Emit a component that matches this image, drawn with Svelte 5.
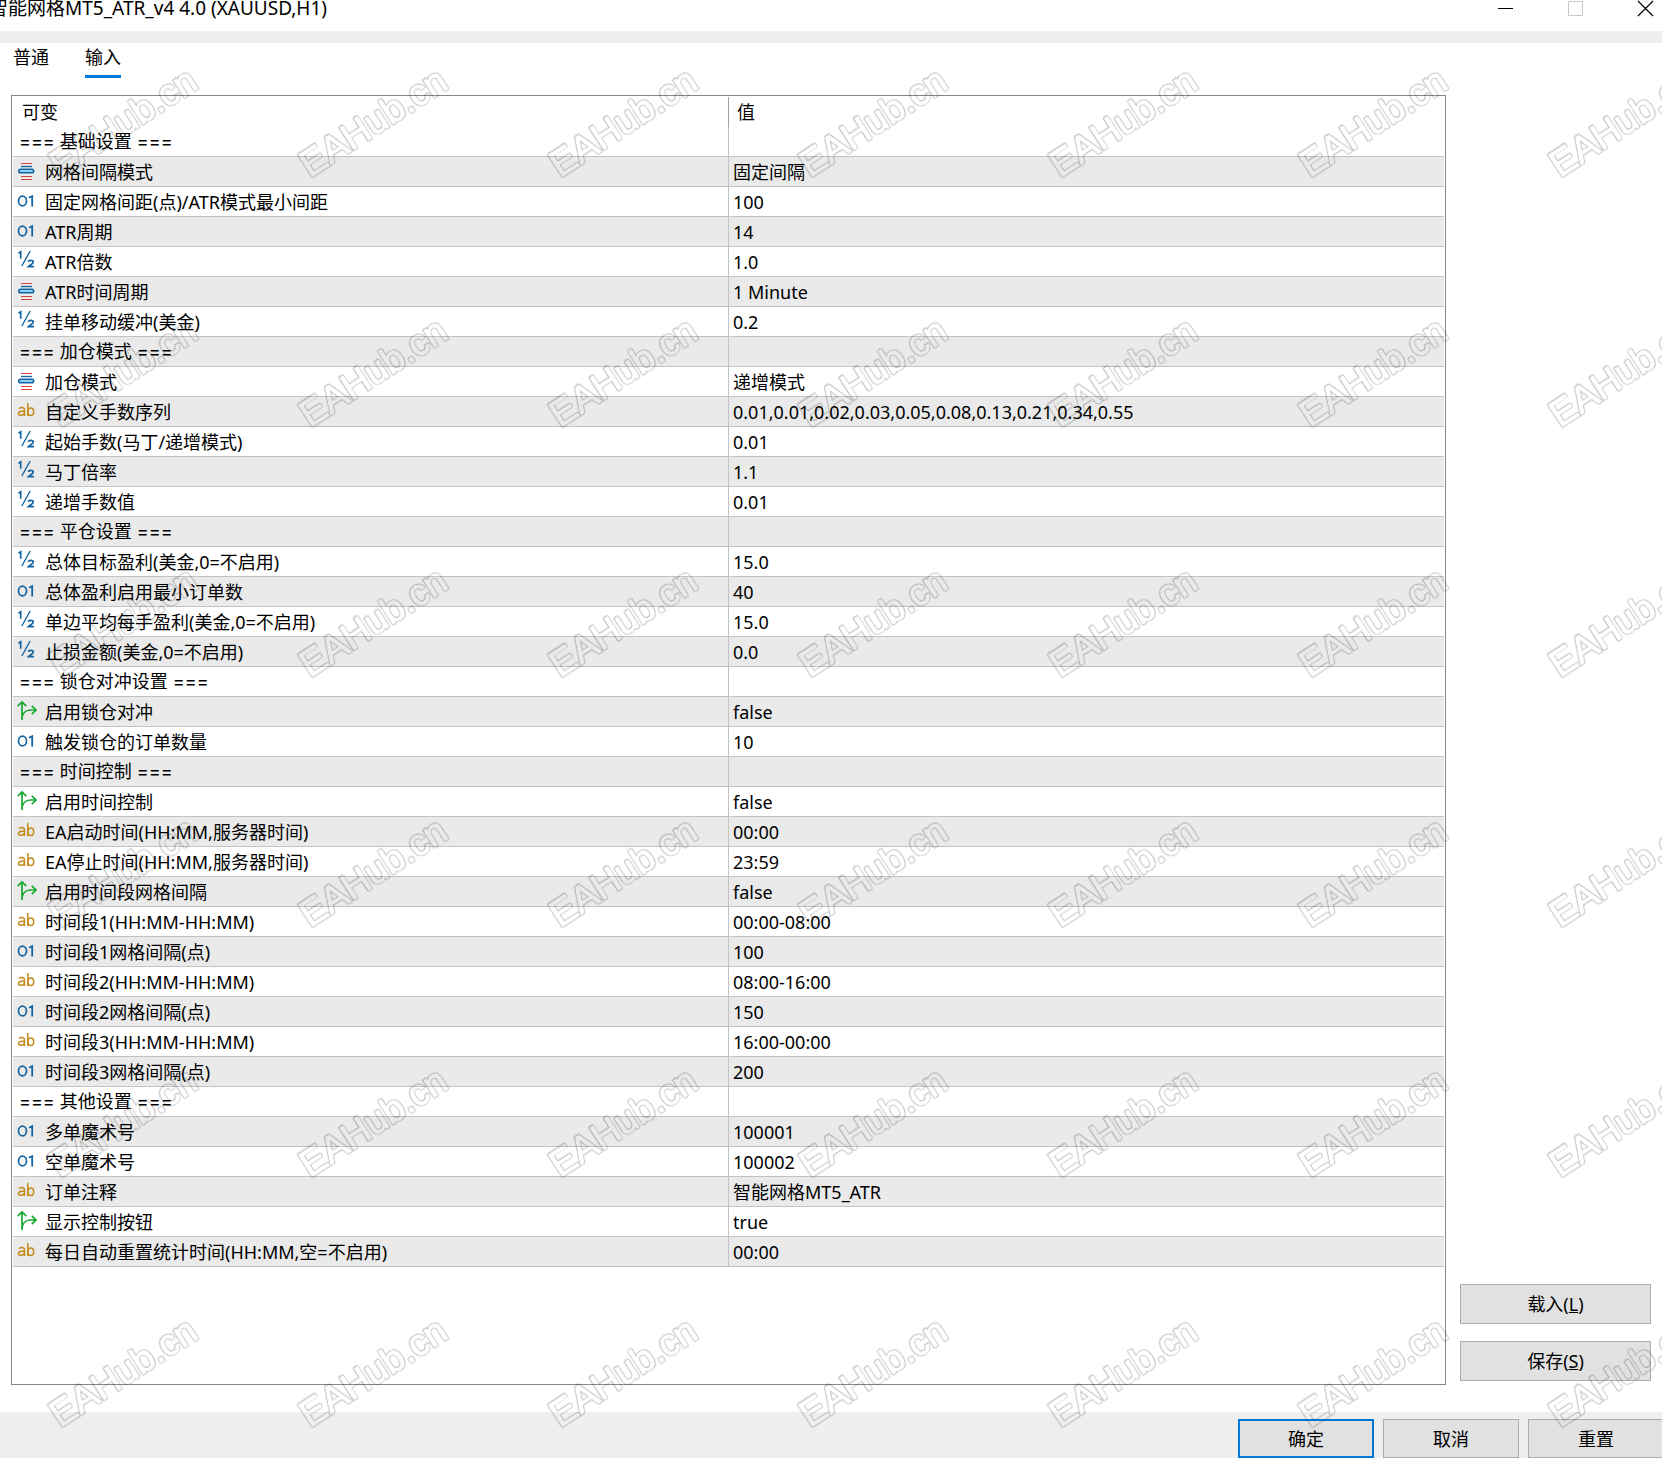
<script lang="ts">
	type Kind = 'enum' | 'int' | 'double' | 'string' | 'bool' | 'group';

	const rows: [Kind, string, string][] = [
		['group', '=== 基础设置 ===', ''],
		['enum', '网格间隔模式', '固定间隔'],
		['int', '固定网格间距(点)/ATR模式最小间距', '100'],
		['int', 'ATR周期', '14'],
		['double', 'ATR倍数', '1.0'],
		['enum', 'ATR时间周期', '1 Minute'],
		['double', '挂单移动缓冲(美金)', '0.2'],
		['group', '=== 加仓模式 ===', ''],
		['enum', '加仓模式', '递增模式'],
		['string', '自定义手数序列', '0.01,0.01,0.02,0.03,0.05,0.08,0.13,0.21,0.34,0.55'],
		['double', '起始手数(马丁/递增模式)', '0.01'],
		['double', '马丁倍率', '1.1'],
		['double', '递增手数值', '0.01'],
		['group', '=== 平仓设置 ===', ''],
		['double', '总体目标盈利(美金,0=不启用)', '15.0'],
		['int', '总体盈利启用最小订单数', '40'],
		['double', '单边平均每手盈利(美金,0=不启用)', '15.0'],
		['double', '止损金额(美金,0=不启用)', '0.0'],
		['group', '=== 锁仓对冲设置 ===', ''],
		['bool', '启用锁仓对冲', 'false'],
		['int', '触发锁仓的订单数量', '10'],
		['group', '=== 时间控制 ===', ''],
		['bool', '启用时间控制', 'false'],
		['string', 'EA启动时间(HH:MM,服务器时间)', '00:00'],
		['string', 'EA停止时间(HH:MM,服务器时间)', '23:59'],
		['bool', '启用时间段网格间隔', 'false'],
		['string', '时间段1(HH:MM-HH:MM)', '00:00-08:00'],
		['int', '时间段1网格间隔(点)', '100'],
		['string', '时间段2(HH:MM-HH:MM)', '08:00-16:00'],
		['int', '时间段2网格间隔(点)', '150'],
		['string', '时间段3(HH:MM-HH:MM)', '16:00-00:00'],
		['int', '时间段3网格间隔(点)', '200'],
		['group', '=== 其他设置 ===', ''],
		['int', '多单魔术号', '100001'],
		['int', '空单魔术号', '100002'],
		['string', '订单注释', '智能网格MT5_ATR'],
		['bool', '显示控制按钮', 'true'],
		['string', '每日自动重置统计时间(HH:MM,空=不启用)', '00:00']
	];

	// watermark repeats every 250px
	const markCols = [0, 1, 2, 3, 4, 5, 6];
	const markRows = [0, 1, 2, 3, 4, 5];
</script>

{#snippet icon(kind: Kind)}
	<svg class="icon" width="20" height="20" viewBox="0 0 20 20" fill="none" aria-hidden="true">
		{#if kind === 'enum'}
			<path d="M4 3.5h11M4 16.5h11M4 19.5h11" stroke="#d9443f" />
			<path d="M4 6.5h11" stroke="#1565a3" stroke-width="1.4" />
			<rect x="1.7" y="9.2" width="15" height="3.6" rx="1.8" fill="#8fd0f2" stroke="#1565a3" stroke-width="1.5" />
		{:else if kind === 'int'}
			<ellipse cx="5.5" cy="11" rx="4" ry="4.8" stroke="#1565a3" stroke-width="1.7" />
			<path d="M12 7.8l3.2-1.6v10.2" stroke="#1565a3" stroke-width="1.8" />
		{:else if kind === 'double'}
			<path d="M1.5 3.3l2.2-1.5v7" stroke="#1565a3" stroke-width="1.7" />
			<path d="M13.2 1L4.8 16" stroke="#1565a3" stroke-width="1.4" />
			<path d="M11.5 12c.3-2.3 4.9-2.2 4.7.2-.1 1.6-3.2 2.7-4.7 4.5h5.5" stroke="#1565a3" stroke-width="1.8" />
		{:else if kind === 'string'}
			<path d="M2 8.5c2-1.7 5.5-1.4 5.5 1.500v6M7.500 11c-3 0-6 .2-6 2.400 0 2.800 5 2.600 6-.8" stroke="#c48a1a" stroke-width="1.5" />
			<path d="M10.8 3v13" stroke="#c48a1a" stroke-width="1.5" />
			<ellipse cx="13.8" cy="11.7" rx="2.9" ry="3.7" stroke="#c48a1a" stroke-width="1.5" />
		{:else}
			<path d="M5 20V2M.7 6.200L5 2l4.300 4.200M5 19.500c0-6 3.500-9.500 8.500-9.500H19M14.800 5.800L19 10l-4.200 4.200" stroke="#17a82f" stroke-width="1.7" />
		{/if}
	</svg>
{/snippet}

{#snippet marks()}
	{#each markRows as r}
		{#each markCols as c}
			<text transform="translate({60 + c * 250} {178 + r * 250}) rotate(-33)">EAHub.cn</text>
		{/each}
	{/each}
{/snippet}

<div class="dialog">
	<header class="titlebar">
		<h1>智能网格MT5_ATR_v4 4.0 (XAUUSD,H1)</h1>
		<div class="win-buttons">
			<button aria-label="最小化"><svg width="17" height="17" viewBox="0 0 17 17"><path d="M1 8.5h15" stroke="#000" /></svg></button>
			<button aria-label="最大化" disabled><svg width="17" height="17" viewBox="0 0 17 17"><path d="M1.5 1.5h14v14h-14z" fill="none" stroke="#c8c8c8" /></svg></button>
			<button aria-label="关闭"><svg width="17" height="17" viewBox="0 0 17 17"><path d="M1 1l15 15M16 1L1 16" stroke="#000" stroke-width="1.2" /></svg></button>
		</div>
	</header>

	<nav class="tabs">
		<button class="tab">普通</button>
		<button class="tab active">输入</button>
	</nav>

	<main>
		<div class="grid-box">
			<table>
				<thead>
					<tr><th scope="col" class="name">可变</th><th scope="col">值</th></tr>
				</thead>
				<tbody>
					{#each rows as [kind, label, value]}
						<tr>
							<td class="name">
								<div class="cell" class:group={kind === 'group'}>
									{#if kind !== 'group'}{@render icon(kind)}{/if}
									<span>{label}</span>
								</div>
							</td>
							<td>{value}</td>
						</tr>
					{/each}
				</tbody>
			</table>
		</div>
		<aside>
			<button class="btn">载入(<u>L</u>)</button>
			<button class="btn">保存(<u>S</u>)</button>
		</aside>
	</main>

	<footer>
		<button class="btn default">确定</button>
		<button class="btn">取消</button>
		<button class="btn">重置</button>
	</footer>

	<!-- the mask cuts the letters out of their own thick stroke, leaving a thin ring -->
	<svg class="watermark" aria-hidden="true">
		<mask id="ring" maskUnits="userSpaceOnUse" x="0" y="0" width="100%" height="100%">
			<rect width="100%" height="100%" fill="#fff" />
			<g class="cut">{@render marks()}</g>
		</mask>
		<g mask="url(#ring)"><g class="outer">{@render marks()}</g></g>
	</svg>
</div>

<style>
	:global(body) { margin: 0; background: #fff; }
	.dialog {
		position: relative; overflow: hidden; min-height: 100vh;
		display: flex; flex-direction: column;
		font: 18px/28px "Noto Sans", "Noto Sans CJK SC", sans-serif; color: #000; background: #fff;
	}
	button { font: inherit; color: inherit; padding: 0; border: 0; background: none; }

	.titlebar { display: flex; justify-content: space-between; height: 31px; border-bottom: 12px solid #efefef; }
	h1 { margin: -6px 0 0 -11px; font-size: 19px; line-height: 28px; font-weight: 400; white-space: nowrap; }
	.win-buttons { display: flex; gap: 53px; padding-right: 8px; }
	.win-buttons button { height: 17px; }
	.win-buttons svg { display: block; }

	.tabs { display: flex; gap: 36px; padding: 0 13px; height: 52px; }
	.tab { height: 35px; padding-bottom: 4px; border-bottom: 3px solid transparent; }
	.tab.active { border-color: #0078d7; }

	main { flex: 1; display: flex; padding: 0 11px 27px; gap: 14px; }
	.grid-box { flex: 1; box-sizing: border-box; padding: 1px; border: 1px solid #828790; }
	table { width: 100%; border-collapse: collapse; table-layout: fixed; }
	th { height: 30px; padding: 0 8px; font-weight: 400; text-align: left; }
	td { height: 29px; padding: 0 4px; border-bottom: 1px solid #c3c3c3; white-space: nowrap; }
	th, td { line-height: 28px; }
	.name { width: calc(50% - 1px); box-sizing: border-box; border-right: 1px solid #c3c3c3; }
	th.name { padding-left: 9px; border-right-color: #a0a0a0; }
	tbody tr:nth-child(even) { background: #eaeaea; }
	.cell { display: flex; align-items: flex-start; gap: 8px; }
	.cell.group { padding: 1px 0 0 2px; font-family: Inter, "Noto Sans CJK SC", sans-serif; }
	.icon { margin-top: 2px; }

	aside { width: 191px; display: flex; flex-direction: column; justify-content: flex-end; gap: 17px; padding-bottom: 4px; }
	.btn { box-sizing: border-box; height: 40px; border: 1px solid #adadad; background: #e1e1e1; }
	.btn.default { border: 2px solid #0078d7; }
	footer { display: flex; justify-content: flex-end; gap: 9px; padding-top: 7px; background: #efefef; margin-right: -2px; }
	footer .btn { width: 136px; height: 39px; }

	.watermark { position: absolute; inset: 0; width: 100%; height: 100%; pointer-events: none; }
	.watermark text { font: 37px "Liberation Sans", sans-serif; stroke-linejoin: round; }
	.cut { fill: #000; stroke: #000; stroke-width: 1px; }
	.outer { fill: none; stroke: #000; stroke-width: 3px; opacity: 0.22; }
</style>
